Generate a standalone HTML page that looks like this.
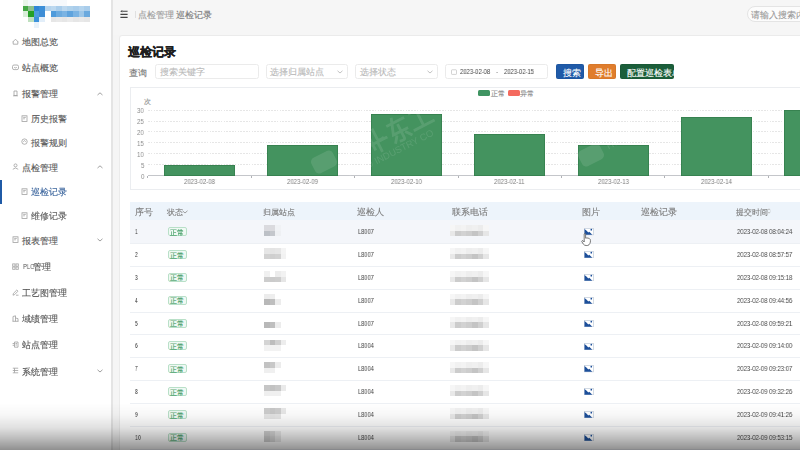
<!DOCTYPE html>
<html><head><meta charset="utf-8"><title>巡检记录</title>
<style>
html,body{margin:0;padding:0;}
body{width:800px;height:450px;overflow:hidden;position:relative;background:#fff;font-family:"Liberation Sans",sans-serif;}
.t{position:absolute;white-space:nowrap;line-height:1;}
.r{position:absolute;}
#wrap{position:absolute;left:-4px;top:-4px;width:808px;height:458px;overflow:hidden;filter:blur(0.4px);}
#inner{position:absolute;left:4px;top:4px;width:804px;height:454px;}
</style></head><body>
<div id="wrap"><div id="inner">
<div class="r" style="left:-4.00px;top:-4.00px;width:115.00px;height:458.00px;background:#fff"></div>
<div class="r" style="left:111.00px;top:-4.00px;width:2.00px;height:458.00px;background:#e4e4e4"></div>
<div class="r" style="left:113.00px;top:-4.00px;width:691.00px;height:458.00px;background:#f5f5f5"></div>
<div class="r" style="left:113.00px;top:-4.00px;width:691.00px;height:39.00px;background:#f6f6f6"></div>
<div class="r" style="left:0;top:0;width:100px;height:40px;filter:blur(0.45px)">
<div class="r" style="left:22.50px;top:0.00px;width:5.65px;height:5.65px;background:#e8f5e8"></div>
<div class="r" style="left:28.10px;top:0.00px;width:5.65px;height:5.65px;background:#f3f8fb"></div>
<div class="r" style="left:33.70px;top:0.00px;width:5.65px;height:5.65px;background:#f3f8fb"></div>
<div class="r" style="left:39.30px;top:0.00px;width:5.65px;height:5.65px;background:#f3f8fb"></div>
<div class="r" style="left:44.90px;top:0.00px;width:5.65px;height:5.65px;background:#f6f9fc"></div>
<div class="r" style="left:50.50px;top:0.00px;width:5.65px;height:5.65px;background:#f6f9fc"></div>
<div class="r" style="left:56.10px;top:0.00px;width:5.65px;height:5.65px;background:#f6f9fc"></div>
<div class="r" style="left:61.70px;top:0.00px;width:5.65px;height:5.65px;background:#f6f9fc"></div>
<div class="r" style="left:22.50px;top:5.60px;width:5.65px;height:5.65px;background:#45a845"></div>
<div class="r" style="left:28.10px;top:5.60px;width:5.65px;height:5.65px;background:#8cc08c"></div>
<div class="r" style="left:33.70px;top:5.60px;width:5.65px;height:5.65px;background:#2f86d6"></div>
<div class="r" style="left:39.30px;top:5.60px;width:5.65px;height:5.65px;background:#3b8fd8"></div>
<div class="r" style="left:44.90px;top:5.60px;width:5.65px;height:5.65px;background:#b4d4ee"></div>
<div class="r" style="left:50.50px;top:5.60px;width:5.65px;height:5.65px;background:#bcd8ef"></div>
<div class="r" style="left:56.10px;top:5.60px;width:5.65px;height:5.65px;background:#a9cdeb"></div>
<div class="r" style="left:61.70px;top:5.60px;width:5.65px;height:5.65px;background:#bcd8ef"></div>
<div class="r" style="left:67.30px;top:5.60px;width:5.65px;height:5.65px;background:#b0d2ec"></div>
<div class="r" style="left:72.90px;top:5.60px;width:5.65px;height:5.65px;background:#a9cdeb"></div>
<div class="r" style="left:78.50px;top:5.60px;width:5.65px;height:5.65px;background:#b4d4ee"></div>
<div class="r" style="left:84.10px;top:5.60px;width:5.65px;height:5.65px;background:#a9cdeb"></div>
<div class="r" style="left:22.50px;top:11.20px;width:5.65px;height:5.65px;background:#d9eed9"></div>
<div class="r" style="left:28.10px;top:11.20px;width:5.65px;height:5.65px;background:#25a025"></div>
<div class="r" style="left:33.70px;top:11.20px;width:5.65px;height:5.65px;background:#4e9ddd"></div>
<div class="r" style="left:39.30px;top:11.20px;width:5.65px;height:5.65px;background:#3d8dd6"></div>
<div class="r" style="left:50.50px;top:11.20px;width:5.65px;height:5.65px;background:#4f9bdb"></div>
<div class="r" style="left:56.10px;top:11.20px;width:5.65px;height:5.65px;background:#6cabdf"></div>
<div class="r" style="left:61.70px;top:11.20px;width:5.65px;height:5.65px;background:#7ab3e3"></div>
<div class="r" style="left:67.30px;top:11.20px;width:5.65px;height:5.65px;background:#5fa3dd"></div>
<div class="r" style="left:72.90px;top:11.20px;width:5.65px;height:5.65px;background:#7ab3e3"></div>
<div class="r" style="left:78.50px;top:11.20px;width:5.65px;height:5.65px;background:#9cc6e8"></div>
<div class="r" style="left:84.10px;top:11.20px;width:5.65px;height:5.65px;background:#6aa9de"></div>
<div class="r" style="left:28.10px;top:16.80px;width:5.65px;height:5.65px;background:#bfe0bf"></div>
<div class="r" style="left:33.70px;top:16.80px;width:5.65px;height:5.65px;background:#3c92dc"></div>
<div class="r" style="left:39.30px;top:16.80px;width:5.65px;height:5.65px;background:#e2eef9"></div>
<div class="r" style="left:50.50px;top:16.80px;width:5.65px;height:5.65px;background:#e6e6e6"></div>
<div class="r" style="left:56.10px;top:16.80px;width:5.65px;height:5.65px;background:#e9e9e9"></div>
<div class="r" style="left:61.70px;top:16.80px;width:5.65px;height:5.65px;background:#e6e6e6"></div>
<div class="r" style="left:67.30px;top:16.80px;width:5.65px;height:5.65px;background:#ebebeb"></div>
<div class="r" style="left:72.90px;top:16.80px;width:5.65px;height:5.65px;background:#e6e6e6"></div>
<div class="r" style="left:78.50px;top:16.80px;width:5.65px;height:5.65px;background:#e9e9e9"></div>
<div class="r" style="left:84.10px;top:16.80px;width:5.65px;height:5.65px;background:#e6e6e6"></div>
<div class="r" style="left:33.70px;top:22.40px;width:5.65px;height:5.65px;background:#e8f2fa"></div>
</div>
<svg class="r" style="left:11.50px;top:37.50px" width="7" height="7" viewBox="0 0 7 7"><path d="M0.6 4.2 L3.5 1.2 L6.4 4.2 M1.2 3.6 V6.2 H5.8 V3.6" stroke="#a0a0a0" stroke-width="0.8" fill="none"/></svg>
<div class="t" style="left:21.90px;top:37.84px;font-size:8.71px;color:#555555;font-weight:normal;-webkit-text-stroke:0.12px #555555;">地图总览</div>
<svg class="r" style="left:11.50px;top:63.70px" width="7" height="7" viewBox="0 0 7 7"><rect x="0.5" y="1" width="6" height="4.6" rx="1.5" stroke="#a0a0a0" stroke-width="0.8" fill="none"/><path d="M2.2 3.4 Q3.5 4.4 4.8 3.4" stroke="#a0a0a0" stroke-width="0.8" fill="none"/></svg>
<div class="t" style="left:21.90px;top:64.04px;font-size:8.71px;color:#555555;font-weight:normal;-webkit-text-stroke:0.12px #555555;">站点概览</div>
<svg class="r" style="left:11.50px;top:90.10px" width="7" height="7" viewBox="0 0 7 7"><path d="M2 1 H5 V5.5 H2 Z M1 5.8 H6" stroke="#a0a0a0" stroke-width="0.8" fill="none"/></svg>
<div class="t" style="left:21.90px;top:90.44px;font-size:8.71px;color:#555555;font-weight:normal;-webkit-text-stroke:0.12px #555555;">报警管理</div>
<svg class="r" style="left:96.50px;top:91.60px" width="6" height="4" viewBox="0 0 6 4"><path d="M0.5 3 L3 0.8 L5.5 3" stroke="#888" stroke-width="0.8" fill="none"/></svg>
<svg class="r" style="left:11.50px;top:163.20px" width="7" height="7" viewBox="0 0 7 7"><circle cx="3.5" cy="2.4" r="1.5" stroke="#a0a0a0" stroke-width="0.8" fill="none"/><path d="M0.8 6.3 Q3.5 3.6 6.2 6.3" stroke="#a0a0a0" stroke-width="0.8" fill="none"/></svg>
<div class="t" style="left:21.90px;top:163.54px;font-size:8.71px;color:#555555;font-weight:normal;-webkit-text-stroke:0.12px #555555;">点检管理</div>
<svg class="r" style="left:96.50px;top:164.70px" width="6" height="4" viewBox="0 0 6 4"><path d="M0.5 3 L3 0.8 L5.5 3" stroke="#888" stroke-width="0.8" fill="none"/></svg>
<svg class="r" style="left:11.50px;top:236.30px" width="7" height="7" viewBox="0 0 7 7"><rect x="1" y="0.8" width="5" height="5.6" stroke="#a0a0a0" stroke-width="0.8" fill="none"/><path d="M2.2 2.4 H4.8 M2.2 3.8 H3.8" stroke="#a0a0a0" stroke-width="0.8" fill="none"/></svg>
<div class="t" style="left:21.90px;top:236.64px;font-size:8.71px;color:#555555;font-weight:normal;-webkit-text-stroke:0.12px #555555;">报表管理</div>
<svg class="r" style="left:96.50px;top:237.80px" width="6" height="4" viewBox="0 0 6 4"><path d="M0.5 0.8 L3 3 L5.5 0.8" stroke="#888" stroke-width="0.8" fill="none"/></svg>
<svg class="r" style="left:11.50px;top:262.50px" width="7" height="7" viewBox="0 0 7 7"><rect x="0.7" y="0.9" width="2.3" height="2.3" stroke="#a0a0a0" stroke-width="0.8" fill="none"/><rect x="4" y="0.9" width="2.3" height="2.3" stroke="#a0a0a0" stroke-width="0.8" fill="none"/><rect x="0.7" y="4" width="2.3" height="2.3" stroke="#a0a0a0" stroke-width="0.8" fill="none"/><rect x="4" y="4" width="2.3" height="2.3" stroke="#a0a0a0" stroke-width="0.8" fill="none"/></svg>
<div class="t" style="left:22.50px;top:262.96px;font-size:7.68px;color:#555555;font-weight:normal;transform:scaleX(0.753);transform-origin:0 50%;will-change:transform">PLC</div>
<div class="t" style="left:33.30px;top:262.84px;font-size:8.71px;color:#555555;font-weight:normal;-webkit-text-stroke:0.12px #555555;">管理</div>
<svg class="r" style="left:11.50px;top:288.50px" width="7" height="7" viewBox="0 0 7 7"><path d="M1 6.2 L1.4 4.4 L4.8 1 L6 2.2 L2.6 5.6 Z M4 6.2 H6.5" stroke="#a0a0a0" stroke-width="0.8" fill="none"/></svg>
<div class="t" style="left:21.90px;top:288.84px;font-size:8.71px;color:#555555;font-weight:normal;-webkit-text-stroke:0.12px #555555;">工艺图管理</div>
<svg class="r" style="left:11.50px;top:314.50px" width="7" height="7" viewBox="0 0 7 7"><path d="M1 6.3 V1.5 L3.5 0.8 V6.3 M3.5 3 L6 3.6 V6.3 M0.5 6.3 H6.5" stroke="#a0a0a0" stroke-width="0.8" fill="none"/></svg>
<div class="t" style="left:21.90px;top:314.84px;font-size:8.71px;color:#555555;font-weight:normal;-webkit-text-stroke:0.12px #555555;">域绩管理</div>
<svg class="r" style="left:11.50px;top:341.00px" width="7" height="7" viewBox="0 0 7 7"><path d="M2.5 1 V6.2 H6 V1 Z M0.6 2.5 H2.5 M0.6 4.3 H2.5 M3.5 2.5 H5 M3.5 4 H5" stroke="#a0a0a0" stroke-width="0.8" fill="none"/></svg>
<div class="t" style="left:21.90px;top:341.34px;font-size:8.71px;color:#555555;font-weight:normal;-webkit-text-stroke:0.12px #555555;">站点管理</div>
<svg class="r" style="left:11.50px;top:367.30px" width="7" height="7" viewBox="0 0 7 7"><path d="M0.8 1.2 H6.2 M0.8 3.5 H6.2 M0.8 5.8 H6.2 M2.5 1.2 V5.8" stroke="#a0a0a0" stroke-width="0.8" fill="none"/></svg>
<div class="t" style="left:21.90px;top:367.64px;font-size:8.71px;color:#555555;font-weight:normal;-webkit-text-stroke:0.12px #555555;">系统管理</div>
<svg class="r" style="left:96.50px;top:368.80px" width="6" height="4" viewBox="0 0 6 4"><path d="M0.5 0.8 L3 3 L5.5 0.8" stroke="#888" stroke-width="0.8" fill="none"/></svg>
<svg class="r" style="left:20.50px;top:114.50px" width="7" height="7" viewBox="0 0 7 7"><rect x="1" y="0.8" width="5" height="5.6" stroke="#a0a0a0" stroke-width="0.8" fill="none"/><path d="M2.2 2.4 H4.8 M2.2 3.8 H3.8" stroke="#a0a0a0" stroke-width="0.8" fill="none"/></svg>
<div class="t" style="left:31.20px;top:114.84px;font-size:8.71px;color:#5c5c5c;font-weight:normal;-webkit-text-stroke:0.12px #5c5c5c;">历史报警</div>
<svg class="r" style="left:20.50px;top:138.20px" width="7" height="7" viewBox="0 0 7 7"><circle cx="3.5" cy="3.6" r="2.7" stroke="#a0a0a0" stroke-width="0.8" fill="none"/><path d="M2.3 3.8 L3.5 2.5 L4.7 3.8" stroke="#a0a0a0" stroke-width="0.8" fill="none"/></svg>
<div class="t" style="left:31.20px;top:138.54px;font-size:8.71px;color:#5c5c5c;font-weight:normal;-webkit-text-stroke:0.12px #5c5c5c;">报警规则</div>
<svg class="r" style="left:20.50px;top:187.50px" width="7" height="7" viewBox="0 0 7 7"><rect x="1" y="0.8" width="5" height="5.6" stroke="#a0a0a0" stroke-width="0.8" fill="none"/><path d="M2.2 2.4 H4.8 M2.2 3.8 H3.8" stroke="#a0a0a0" stroke-width="0.8" fill="none"/></svg>
<div class="t" style="left:31.20px;top:187.84px;font-size:8.71px;color:#3a649c;font-weight:normal;-webkit-text-stroke:0.12px #3a649c;">巡检记录</div>
<svg class="r" style="left:20.50px;top:211.50px" width="7" height="7" viewBox="0 0 7 7"><rect x="1" y="0.8" width="5" height="5.6" stroke="#a0a0a0" stroke-width="0.8" fill="none"/><path d="M2.2 2.4 H4.8 M2.2 3.8 H3.8" stroke="#a0a0a0" stroke-width="0.8" fill="none"/></svg>
<div class="t" style="left:31.20px;top:211.84px;font-size:8.71px;color:#5c5c5c;font-weight:normal;-webkit-text-stroke:0.12px #5c5c5c;">维修记录</div>
<div class="r" style="left:0.00px;top:180.00px;width:2.20px;height:23.50px;background:#1f5aa6"></div>
<svg class="r" style="left:120.00px;top:10.00px" width="8" height="8.5" viewBox="0 0 8 8.5"><path d="M2.4 1.3 H7.6 M0.4 4.4 H7.6 M0.4 7.4 H7.6" stroke="#444" stroke-width="1.1"/><path d="M0.2 1.3 L2.4 0 V2.6 Z" fill="#444"/></svg>
<div class="r" style="left:135.00px;top:10.50px;width:0.80px;height:7.50px;background:#e0e0e0"></div>
<div class="t" style="left:138.20px;top:11.04px;font-size:8.71px;color:#9c9c9c;font-weight:normal;-webkit-text-stroke:0.12px #9c9c9c;">点检管理</div>
<div class="t" style="left:170.50px;top:11.20px;font-size:6.00px;color:#aaa;font-weight:normal;">/</div>
<div class="t" style="left:175.60px;top:11.04px;font-size:8.71px;color:#7a7a7a;font-weight:normal;-webkit-text-stroke:0.12px #7a7a7a;">巡检记录</div>
<div class="r" style="left:746.70px;top:6.00px;width:70.00px;height:15.70px;background:#fcfcfc;border:1px solid #e4e4e4;border-radius:8px;box-sizing:border-box"></div>
<div class="t" style="left:751.40px;top:10.84px;font-size:8.71px;color:#9a9a9a;font-weight:normal;-webkit-text-stroke:0.12px #9a9a9a;">请输入搜索内容</div>
<div class="r" style="left:118.90px;top:35.00px;width:700.00px;height:430.00px;background:#fff;border:1px solid #ebebeb;border-radius:3px;box-sizing:border-box"></div>
<div class="t" style="left:128.20px;top:45.56px;font-size:12.28px;color:#1e1e1e;font-weight:bold;-webkit-text-stroke:0.35px #1e1e1e">巡检记录</div>
<div class="t" style="left:129.00px;top:69.04px;font-size:8.71px;color:#777;font-weight:normal;-webkit-text-stroke:0.12px #777;">查询</div>
<div class="t" style="left:143.60px;top:69.51px;font-size:6.98px;color:#555;font-weight:normal;transform:scaleX(1.000);transform-origin:0 50%;will-change:transform">:</div>
<div class="r" style="left:155.00px;top:64.00px;width:103.50px;height:14.60px;background:#fff;border:1px solid #ebebeb;border-radius:2.5px;box-sizing:border-box"></div>
<div class="t" style="left:160.00px;top:68.34px;font-size:8.71px;color:#bababa;font-weight:normal;-webkit-text-stroke:0.12px #bababa;">搜索关键字</div>
<div class="r" style="left:265.50px;top:64.00px;width:82.00px;height:14.60px;background:#fff;border:1px solid #ebebeb;border-radius:2.5px;box-sizing:border-box"></div>
<div class="t" style="left:270.40px;top:68.34px;font-size:8.71px;color:#bababa;font-weight:normal;-webkit-text-stroke:0.12px #bababa;">选择归属站点</div>
<svg class="r" style="left:336.50px;top:69.50px" width="6" height="4" viewBox="0 0 6 4"><path d="M0.5 0.8 L3 3 L5.5 0.8" stroke="#b4b4b4" stroke-width="0.8" fill="none"/></svg>
<div class="r" style="left:355.00px;top:64.00px;width:82.50px;height:14.60px;background:#fff;border:1px solid #ebebeb;border-radius:2.5px;box-sizing:border-box"></div>
<div class="t" style="left:360.40px;top:68.34px;font-size:8.71px;color:#bababa;font-weight:normal;-webkit-text-stroke:0.12px #bababa;">选择状态</div>
<svg class="r" style="left:426.50px;top:69.50px" width="6" height="4" viewBox="0 0 6 4"><path d="M0.5 0.8 L3 3 L5.5 0.8" stroke="#b4b4b4" stroke-width="0.8" fill="none"/></svg>
<div class="r" style="left:445.40px;top:64.00px;width:102.60px;height:15.00px;background:#fff;border:1px solid #ebebeb;border-radius:2.5px;box-sizing:border-box"></div>
<svg class="r" style="left:450.50px;top:68.50px" width="6" height="6" viewBox="0 0 6 6"><rect x="0.5" y="0.8" width="5" height="4.6" rx="0.6" stroke="#c0c0c0" stroke-width="0.7" fill="none"/></svg>
<div class="t" style="left:459.60px;top:69.12px;font-size:6.56px;color:#444;font-weight:normal;transform:scaleX(0.903);transform-origin:0 50%;will-change:transform">2023-02-08</div>
<div class="t" style="left:496.20px;top:69.12px;font-size:6.56px;color:#777;font-weight:normal;transform:scaleX(1.000);transform-origin:0 50%;will-change:transform">-</div>
<div class="t" style="left:504.00px;top:69.12px;font-size:6.56px;color:#444;font-weight:normal;transform:scaleX(0.894);transform-origin:0 50%;will-change:transform">2023-02-15</div>
<div class="r" style="left:556.20px;top:64.10px;width:27.90px;height:14.60px;background:#1f5aa8;border-radius:2px;box-shadow:inset 0 0 0 0.6px rgba(0,0,0,0.08)"></div>
<div class="t" style="left:562.95px;top:68.64px;font-size:8.71px;color:#fff;font-weight:normal;-webkit-text-stroke:0.12px #fff;">搜索</div>
<div class="r" style="left:588.00px;top:64.10px;width:27.70px;height:14.60px;background:#e07d2c;border-radius:2px;box-shadow:inset 0 0 0 0.6px rgba(0,0,0,0.08)"></div>
<div class="t" style="left:594.65px;top:68.64px;font-size:8.71px;color:#fff;font-weight:normal;-webkit-text-stroke:0.12px #fff;">导出</div>
<div class="r" style="left:619.80px;top:64.10px;width:54.20px;height:14.60px;background:#1b5e3a;border-radius:2px;box-shadow:inset 0 0 0 0.6px rgba(0,0,0,0.08)"></div>
<div class="t" style="left:626.50px;top:68.64px;font-size:8.71px;color:#fff;font-weight:normal;-webkit-text-stroke:0.12px #fff;">配置巡检表单</div>
<div class="r" style="left:129.90px;top:86.50px;width:690.00px;height:103.70px;background:#fff;border:1px solid #ebedf0;box-sizing:border-box"></div>
<div class="r" style="left:478.00px;top:89.60px;width:11.75px;height:6.30px;background:#3f9462;border-radius:1.5px"></div>
<div class="t" style="left:491.40px;top:90.27px;font-size:7.26px;color:#8a8a8a;font-weight:normal;-webkit-text-stroke:0.12px #8a8a8a;">正常</div>
<div class="r" style="left:508.00px;top:89.60px;width:11.75px;height:6.30px;background:#f46a5e;border-radius:1.5px"></div>
<div class="t" style="left:519.90px;top:90.27px;font-size:7.26px;color:#8a8a8a;font-weight:normal;-webkit-text-stroke:0.12px #8a8a8a;">异常</div>
<div class="t" style="left:144.00px;top:97.57px;font-size:7.26px;color:#8a8a8a;font-weight:normal;-webkit-text-stroke:0.12px #8a8a8a;">次</div>
<div class="t" style="left:137.20px;top:107.91px;font-size:6.28px;color:#8c8c8c;font-weight:normal;transform:scaleX(0.959);transform-origin:0 50%;will-change:transform">30</div>
<div class="r" style="left:147.5px;top:109.55px;width:660px;height:1px;background:repeating-linear-gradient(to right,#e6e6e6 0,#e6e6e6 1.6px,transparent 1.6px,transparent 2.8px)"></div>
<div class="t" style="left:137.20px;top:118.86px;font-size:6.28px;color:#8c8c8c;font-weight:normal;transform:scaleX(0.959);transform-origin:0 50%;will-change:transform">25</div>
<div class="r" style="left:147.5px;top:120.50px;width:660px;height:1px;background:repeating-linear-gradient(to right,#e6e6e6 0,#e6e6e6 1.6px,transparent 1.6px,transparent 2.8px)"></div>
<div class="t" style="left:137.20px;top:129.81px;font-size:6.28px;color:#8c8c8c;font-weight:normal;transform:scaleX(0.959);transform-origin:0 50%;will-change:transform">20</div>
<div class="r" style="left:147.5px;top:131.45px;width:660px;height:1px;background:repeating-linear-gradient(to right,#e6e6e6 0,#e6e6e6 1.6px,transparent 1.6px,transparent 2.8px)"></div>
<div class="t" style="left:137.20px;top:140.76px;font-size:6.28px;color:#8c8c8c;font-weight:normal;transform:scaleX(0.959);transform-origin:0 50%;will-change:transform">15</div>
<div class="r" style="left:147.5px;top:142.40px;width:660px;height:1px;background:repeating-linear-gradient(to right,#e6e6e6 0,#e6e6e6 1.6px,transparent 1.6px,transparent 2.8px)"></div>
<div class="t" style="left:137.20px;top:151.71px;font-size:6.28px;color:#8c8c8c;font-weight:normal;transform:scaleX(0.959);transform-origin:0 50%;will-change:transform">10</div>
<div class="r" style="left:147.5px;top:153.35px;width:660px;height:1px;background:repeating-linear-gradient(to right,#e6e6e6 0,#e6e6e6 1.6px,transparent 1.6px,transparent 2.8px)"></div>
<div class="t" style="left:140.55px;top:162.66px;font-size:6.28px;color:#8c8c8c;font-weight:normal;transform:scaleX(0.959);transform-origin:0 50%;will-change:transform">5</div>
<div class="r" style="left:147.5px;top:164.30px;width:660px;height:1px;background:repeating-linear-gradient(to right,#e6e6e6 0,#e6e6e6 1.6px,transparent 1.6px,transparent 2.8px)"></div>
<div class="t" style="left:140.55px;top:173.61px;font-size:6.28px;color:#8c8c8c;font-weight:normal;transform:scaleX(0.959);transform-origin:0 50%;will-change:transform">0</div>
<div class="r" style="left:147.50px;top:175.35px;width:660.00px;height:1.00px;background:#c4c6ca"></div>
<div class="r" style="left:147.20px;top:175.75px;width:0.80px;height:2.00px;background:#b0b2b6"></div>
<div class="r" style="left:250.65px;top:175.75px;width:0.80px;height:2.00px;background:#b0b2b6"></div>
<div class="r" style="left:354.10px;top:175.75px;width:0.80px;height:2.00px;background:#b0b2b6"></div>
<div class="r" style="left:457.55px;top:175.75px;width:0.80px;height:2.00px;background:#b0b2b6"></div>
<div class="r" style="left:561.00px;top:175.75px;width:0.80px;height:2.00px;background:#b0b2b6"></div>
<div class="r" style="left:664.45px;top:175.75px;width:0.80px;height:2.00px;background:#b0b2b6"></div>
<div class="r" style="left:767.90px;top:175.75px;width:0.80px;height:2.00px;background:#b0b2b6"></div>
<div class="r" style="left:871.35px;top:175.75px;width:0.80px;height:2.00px;background:#b0b2b6"></div>
<div class="r" style="left:163.75px;top:164.80px;width:71.20px;height:10.95px;background:#44935f;box-shadow:inset 0 0 0 0.7px #337d4c"></div>
<div class="t" style="left:183.85px;top:179.08px;font-size:6.63px;color:#7c7c7c;font-weight:normal;transform:scaleX(0.914);transform-origin:0 50%;will-change:transform">2023-02-08</div>
<div class="r" style="left:267.20px;top:145.09px;width:71.20px;height:30.66px;background:#44935f;box-shadow:inset 0 0 0 0.7px #337d4c"></div>
<div class="t" style="left:287.30px;top:179.08px;font-size:6.63px;color:#7c7c7c;font-weight:normal;transform:scaleX(0.914);transform-origin:0 50%;will-change:transform">2023-02-09</div>
<div class="r" style="left:370.65px;top:114.43px;width:71.20px;height:61.32px;background:#44935f;box-shadow:inset 0 0 0 0.7px #337d4c"></div>
<div class="t" style="left:390.75px;top:179.08px;font-size:6.63px;color:#7c7c7c;font-weight:normal;transform:scaleX(0.914);transform-origin:0 50%;will-change:transform">2023-02-10</div>
<div class="r" style="left:474.10px;top:134.14px;width:71.20px;height:41.61px;background:#44935f;box-shadow:inset 0 0 0 0.7px #337d4c"></div>
<div class="t" style="left:494.20px;top:179.08px;font-size:6.63px;color:#7c7c7c;font-weight:normal;transform:scaleX(0.914);transform-origin:0 50%;will-change:transform">2023-02-11</div>
<div class="r" style="left:577.55px;top:145.09px;width:71.20px;height:30.66px;background:#44935f;box-shadow:inset 0 0 0 0.7px #337d4c"></div>
<div class="t" style="left:597.65px;top:179.08px;font-size:6.63px;color:#7c7c7c;font-weight:normal;transform:scaleX(0.914);transform-origin:0 50%;will-change:transform">2023-02-13</div>
<div class="r" style="left:681.00px;top:116.62px;width:71.20px;height:59.13px;background:#44935f;box-shadow:inset 0 0 0 0.7px #337d4c"></div>
<div class="t" style="left:701.10px;top:179.08px;font-size:6.63px;color:#7c7c7c;font-weight:normal;transform:scaleX(0.914);transform-origin:0 50%;will-change:transform">2023-02-14</div>
<div class="r" style="left:784.45px;top:110.05px;width:71.20px;height:65.70px;background:#44935f;box-shadow:inset 0 0 0 0.7px #337d4c"></div>
<div class="t" style="left:804.55px;top:179.08px;font-size:6.63px;color:#7c7c7c;font-weight:normal;transform:scaleX(0.914);transform-origin:0 50%;will-change:transform">2023-02-15</div>
<svg class="r" style="left:0;top:0;opacity:0.11" width="800" height="200" viewBox="0 0 800 200"><g transform="translate(324 162) rotate(-27)" fill="#fff" stroke="none"><rect x="-12" y="-8.5" width="24" height="17" rx="4.5"/><g fill="none" stroke="#fff" stroke-width="2.6" stroke-linecap="square" transform="translate(6 1) scale(1.08)"><path d="M44 -6 L38 4 M42 -2 V10 M48 -7 V2 Q48 5 53 4 M38 5 H56 M47 5 V14"/><path d="M62 -4 H78 M68 -8 L63 6 H77 M71 0 V13 Q71 15 67 14 M65 9 L62 13 M75 9 L78 13"/><path d="M85 -5 H100 M92 -5 V11 M83 11 H102"/></g><text x="16" y="26" font-family="Liberation Sans" font-size="9.5" fill="#fff">HUAD INDUSTRY CO</text></g><g transform="translate(591 155) rotate(-27)" fill="#fff" stroke="none"><rect x="-12" y="-8.5" width="24" height="17" rx="4.5"/><text x="18" y="3" font-family="Liberation Sans" font-size="9.5" fill="#fff">HU</text></g></svg>
<div class="r" style="left:130.00px;top:202.00px;width:690.00px;height:18.30px;background:#edf4fb"></div>
<div class="t" style="left:134.70px;top:207.98px;font-size:8.84px;color:#7c7c7c;font-weight:normal;-webkit-text-stroke:0.12px #7c7c7c;">序号</div>
<div class="t" style="left:167.40px;top:208.18px;font-size:8.45px;color:#7c7c7c;font-weight:normal;-webkit-text-stroke:0.12px #7c7c7c;">状态</div>
<svg class="r" style="left:181.50px;top:209.50px" width="6" height="4" viewBox="0 0 6 4"><path d="M0.5 0.8 L3 3 L5.5 0.8" stroke="#888" stroke-width="0.8" fill="none"/></svg>
<div class="t" style="left:263.40px;top:208.18px;font-size:8.45px;color:#7c7c7c;font-weight:normal;-webkit-text-stroke:0.12px #7c7c7c;">归属站点</div>
<div class="t" style="left:357.10px;top:208.04px;font-size:8.71px;color:#7c7c7c;font-weight:normal;-webkit-text-stroke:0.12px #7c7c7c;">巡检人</div>
<div class="t" style="left:452.40px;top:208.04px;font-size:8.71px;color:#7c7c7c;font-weight:normal;-webkit-text-stroke:0.12px #7c7c7c;">联系电话</div>
<div class="t" style="left:581.90px;top:208.14px;font-size:8.51px;color:#7c7c7c;font-weight:normal;-webkit-text-stroke:0.12px #7c7c7c;">图片</div>
<div class="t" style="left:641.10px;top:208.04px;font-size:8.71px;color:#7c7c7c;font-weight:normal;-webkit-text-stroke:0.12px #7c7c7c;">巡检记录</div>
<div class="t" style="left:736.40px;top:208.18px;font-size:8.45px;color:#7c7c7c;font-weight:normal;-webkit-text-stroke:0.12px #7c7c7c;">提交时间</div>
<svg class="r" style="left:766.50px;top:208.20px" width="4" height="6" viewBox="0 0 4 6"><path d="M0.6 2.3 L2 0.8 L3.4 2.3 M0.6 3.7 L2 5.2 L3.4 3.7" stroke="#aaa" stroke-width="0.7" fill="none"/></svg>
<div class="r" style="left:130.00px;top:220.30px;width:690.00px;height:22.85px;background:#f4f6fa"></div>
<div class="r" style="left:130.00px;top:243.05px;width:690.00px;height:0.80px;background:#edf0f4"></div>
<div class="t" style="left:135.30px;top:228.23px;font-size:6.98px;color:#333;font-weight:normal;transform:scaleX(0.670);transform-origin:0 50%;will-change:transform">1</div>
<div class="r" style="left:168.00px;top:227.23px;width:18.70px;height:9.00px;background:#f0f9f4;border:0.8px solid #b9e0c8;border-radius:2px;box-sizing:border-box"></div>
<div class="t" style="left:170.00px;top:228.73px;font-size:7.39px;color:#3f9b63;font-weight:normal;-webkit-text-stroke:0.12px #3f9b63;">正常</div>
<div class="r" style="left:264.00px;top:225.33px;width:5.55px;height:5.55px;background:#dadade"></div>
<div class="r" style="left:269.50px;top:225.33px;width:5.55px;height:5.55px;background:#dadade"></div>
<div class="r" style="left:264.00px;top:230.83px;width:5.55px;height:5.55px;background:#bcc0c6"></div>
<div class="r" style="left:269.50px;top:230.83px;width:5.55px;height:5.55px;background:#c4c7cc"></div>
<div class="r" style="left:275.00px;top:225.33px;width:5.55px;height:5.55px;background:#f0f2f5"></div>
<div class="r" style="left:275.00px;top:230.83px;width:5.55px;height:5.55px;background:#eef0f3"></div>
<div class="t" style="left:358.20px;top:229.10px;font-size:6.84px;color:#444;font-weight:normal;transform:scaleX(0.830);transform-origin:0 50%;will-change:transform">L8007</div>
<div class="r" style="left:449.60px;top:225.33px;width:5.65px;height:5.50px;background:#f6f6f6"></div>
<div class="r" style="left:449.60px;top:230.83px;width:5.65px;height:5.50px;background:#e8e8e8"></div>
<div class="r" style="left:455.20px;top:225.33px;width:5.65px;height:5.50px;background:#f1f1f1"></div>
<div class="r" style="left:455.20px;top:230.83px;width:5.65px;height:5.50px;background:#cccccc"></div>
<div class="r" style="left:460.80px;top:225.33px;width:5.65px;height:5.50px;background:#f3f3f3"></div>
<div class="r" style="left:460.80px;top:230.83px;width:5.65px;height:5.50px;background:#d2d2d2"></div>
<div class="r" style="left:466.40px;top:225.33px;width:5.65px;height:5.50px;background:#eeeeee"></div>
<div class="r" style="left:466.40px;top:230.83px;width:5.65px;height:5.50px;background:#cdcdcd"></div>
<div class="r" style="left:472.00px;top:225.33px;width:5.65px;height:5.50px;background:#f0f0f0"></div>
<div class="r" style="left:472.00px;top:230.83px;width:5.65px;height:5.50px;background:#c4c4c4"></div>
<div class="r" style="left:477.60px;top:225.33px;width:5.65px;height:5.50px;background:#ececec"></div>
<div class="r" style="left:477.60px;top:230.83px;width:5.65px;height:5.50px;background:#d0d0d0"></div>
<div class="r" style="left:483.20px;top:225.33px;width:5.65px;height:5.50px;background:#f6f6f6"></div>
<div class="r" style="left:483.20px;top:230.83px;width:5.65px;height:5.50px;background:#e6e6e6"></div>
<svg class="r" style="left:584.30px;top:228.33px" width="9.8" height="7.2" viewBox="0 0 9.8 7.2"><rect x="0.35" y="0.35" width="9.1" height="6.5" fill="#fff" stroke="#bfcad8" stroke-width="0.7"/><path d="M0.5 1.0 L2.4 2.4 L4.3 4.6 L5.3 3.8 L6.8 5.2 L8.3 6.8 H0.5 Z" fill="#1d4f9a"/><circle cx="7.3" cy="1.7" r="0.85" fill="#1d4f9a"/></svg>
<div class="t" style="left:737.20px;top:228.22px;font-size:7.40px;color:#464646;font-weight:normal;transform:scaleX(0.805);transform-origin:0 50%;will-change:transform">2023-02-08 08:04:24</div>
<div class="r" style="left:130.00px;top:265.90px;width:690.00px;height:0.80px;background:#edf0f4"></div>
<div class="t" style="left:135.30px;top:251.08px;font-size:6.98px;color:#333;font-weight:normal;transform:scaleX(0.670);transform-origin:0 50%;will-change:transform">2</div>
<div class="r" style="left:168.00px;top:250.08px;width:18.70px;height:9.00px;background:#f0f9f4;border:0.8px solid #b9e0c8;border-radius:2px;box-sizing:border-box"></div>
<div class="t" style="left:170.00px;top:251.58px;font-size:7.39px;color:#3f9b63;font-weight:normal;-webkit-text-stroke:0.12px #3f9b63;">正常</div>
<div class="r" style="left:264.00px;top:248.18px;width:5.55px;height:5.55px;background:#e6e6e6"></div>
<div class="r" style="left:269.50px;top:248.18px;width:5.55px;height:5.55px;background:#e4e4e4"></div>
<div class="r" style="left:275.00px;top:248.18px;width:5.55px;height:5.55px;background:#e6e6e6"></div>
<div class="r" style="left:264.00px;top:253.68px;width:5.55px;height:5.55px;background:#d2d2d2"></div>
<div class="r" style="left:269.50px;top:253.68px;width:5.55px;height:5.55px;background:#cfcfcf"></div>
<div class="r" style="left:275.00px;top:253.68px;width:5.55px;height:5.55px;background:#d2d2d2"></div>
<div class="r" style="left:280.50px;top:248.18px;width:5.55px;height:5.55px;background:#f4f4f4"></div>
<div class="r" style="left:280.50px;top:253.68px;width:5.55px;height:5.55px;background:#f2f2f2"></div>
<div class="t" style="left:358.20px;top:251.95px;font-size:6.84px;color:#444;font-weight:normal;transform:scaleX(0.830);transform-origin:0 50%;will-change:transform">L8007</div>
<div class="r" style="left:449.60px;top:248.18px;width:5.65px;height:5.50px;background:#f6f6f6"></div>
<div class="r" style="left:449.60px;top:253.68px;width:5.65px;height:5.50px;background:#e8e8e8"></div>
<div class="r" style="left:455.20px;top:248.18px;width:5.65px;height:5.50px;background:#f1f1f1"></div>
<div class="r" style="left:455.20px;top:253.68px;width:5.65px;height:5.50px;background:#cccccc"></div>
<div class="r" style="left:460.80px;top:248.18px;width:5.65px;height:5.50px;background:#f3f3f3"></div>
<div class="r" style="left:460.80px;top:253.68px;width:5.65px;height:5.50px;background:#d2d2d2"></div>
<div class="r" style="left:466.40px;top:248.18px;width:5.65px;height:5.50px;background:#eeeeee"></div>
<div class="r" style="left:466.40px;top:253.68px;width:5.65px;height:5.50px;background:#cdcdcd"></div>
<div class="r" style="left:472.00px;top:248.18px;width:5.65px;height:5.50px;background:#f0f0f0"></div>
<div class="r" style="left:472.00px;top:253.68px;width:5.65px;height:5.50px;background:#c4c4c4"></div>
<div class="r" style="left:477.60px;top:248.18px;width:5.65px;height:5.50px;background:#ececec"></div>
<div class="r" style="left:477.60px;top:253.68px;width:5.65px;height:5.50px;background:#d0d0d0"></div>
<div class="r" style="left:483.20px;top:248.18px;width:5.65px;height:5.50px;background:#f6f6f6"></div>
<div class="r" style="left:483.20px;top:253.68px;width:5.65px;height:5.50px;background:#e6e6e6"></div>
<svg class="r" style="left:584.30px;top:251.18px" width="9.8" height="7.2" viewBox="0 0 9.8 7.2"><rect x="0.35" y="0.35" width="9.1" height="6.5" fill="#fff" stroke="#bfcad8" stroke-width="0.7"/><path d="M0.5 1.0 L2.4 2.4 L4.3 4.6 L5.3 3.8 L6.8 5.2 L8.3 6.8 H0.5 Z" fill="#1d4f9a"/><circle cx="7.3" cy="1.7" r="0.85" fill="#1d4f9a"/></svg>
<div class="t" style="left:737.20px;top:251.07px;font-size:7.40px;color:#464646;font-weight:normal;transform:scaleX(0.805);transform-origin:0 50%;will-change:transform">2023-02-08 08:57:57</div>
<div class="r" style="left:130.00px;top:288.75px;width:690.00px;height:0.80px;background:#edf0f4"></div>
<div class="t" style="left:135.30px;top:273.93px;font-size:6.98px;color:#333;font-weight:normal;transform:scaleX(0.670);transform-origin:0 50%;will-change:transform">3</div>
<div class="r" style="left:168.00px;top:272.93px;width:18.70px;height:9.00px;background:#f0f9f4;border:0.8px solid #b9e0c8;border-radius:2px;box-sizing:border-box"></div>
<div class="t" style="left:170.00px;top:274.43px;font-size:7.39px;color:#3f9b63;font-weight:normal;-webkit-text-stroke:0.12px #3f9b63;">正常</div>
<div class="r" style="left:264.00px;top:271.03px;width:5.55px;height:5.55px;background:#f0f0f0"></div>
<div class="r" style="left:275.00px;top:271.03px;width:5.55px;height:5.55px;background:#ececec"></div>
<div class="r" style="left:280.50px;top:271.03px;width:5.55px;height:5.55px;background:#f2f2f2"></div>
<div class="r" style="left:264.00px;top:276.53px;width:5.55px;height:5.55px;background:#cdcdcd"></div>
<div class="r" style="left:269.50px;top:276.53px;width:5.55px;height:5.55px;background:#cbcbcb"></div>
<div class="r" style="left:275.00px;top:276.53px;width:5.55px;height:5.55px;background:#cdcdcd"></div>
<div class="r" style="left:280.50px;top:276.53px;width:5.55px;height:5.55px;background:#e6e6e6"></div>
<div class="t" style="left:358.20px;top:274.80px;font-size:6.84px;color:#444;font-weight:normal;transform:scaleX(0.830);transform-origin:0 50%;will-change:transform">L8007</div>
<div class="r" style="left:449.60px;top:271.03px;width:5.65px;height:5.50px;background:#f6f6f6"></div>
<div class="r" style="left:449.60px;top:276.53px;width:5.65px;height:5.50px;background:#e8e8e8"></div>
<div class="r" style="left:455.20px;top:271.03px;width:5.65px;height:5.50px;background:#f1f1f1"></div>
<div class="r" style="left:455.20px;top:276.53px;width:5.65px;height:5.50px;background:#cccccc"></div>
<div class="r" style="left:460.80px;top:271.03px;width:5.65px;height:5.50px;background:#f3f3f3"></div>
<div class="r" style="left:460.80px;top:276.53px;width:5.65px;height:5.50px;background:#d2d2d2"></div>
<div class="r" style="left:466.40px;top:271.03px;width:5.65px;height:5.50px;background:#eeeeee"></div>
<div class="r" style="left:466.40px;top:276.53px;width:5.65px;height:5.50px;background:#cdcdcd"></div>
<div class="r" style="left:472.00px;top:271.03px;width:5.65px;height:5.50px;background:#f0f0f0"></div>
<div class="r" style="left:472.00px;top:276.53px;width:5.65px;height:5.50px;background:#c4c4c4"></div>
<div class="r" style="left:477.60px;top:271.03px;width:5.65px;height:5.50px;background:#ececec"></div>
<div class="r" style="left:477.60px;top:276.53px;width:5.65px;height:5.50px;background:#d0d0d0"></div>
<div class="r" style="left:483.20px;top:271.03px;width:5.65px;height:5.50px;background:#f6f6f6"></div>
<div class="r" style="left:483.20px;top:276.53px;width:5.65px;height:5.50px;background:#e6e6e6"></div>
<svg class="r" style="left:584.30px;top:274.03px" width="9.8" height="7.2" viewBox="0 0 9.8 7.2"><rect x="0.35" y="0.35" width="9.1" height="6.5" fill="#fff" stroke="#bfcad8" stroke-width="0.7"/><path d="M0.5 1.0 L2.4 2.4 L4.3 4.6 L5.3 3.8 L6.8 5.2 L8.3 6.8 H0.5 Z" fill="#1d4f9a"/><circle cx="7.3" cy="1.7" r="0.85" fill="#1d4f9a"/></svg>
<div class="t" style="left:737.20px;top:273.92px;font-size:7.40px;color:#464646;font-weight:normal;transform:scaleX(0.805);transform-origin:0 50%;will-change:transform">2023-02-08 09:15:18</div>
<div class="r" style="left:130.00px;top:311.60px;width:690.00px;height:0.80px;background:#edf0f4"></div>
<div class="t" style="left:135.30px;top:296.78px;font-size:6.98px;color:#333;font-weight:normal;transform:scaleX(0.670);transform-origin:0 50%;will-change:transform">4</div>
<div class="r" style="left:168.00px;top:295.78px;width:18.70px;height:9.00px;background:#f0f9f4;border:0.8px solid #b9e0c8;border-radius:2px;box-sizing:border-box"></div>
<div class="t" style="left:170.00px;top:297.28px;font-size:7.39px;color:#3f9b63;font-weight:normal;-webkit-text-stroke:0.12px #3f9b63;">正常</div>
<div class="r" style="left:264.00px;top:293.88px;width:5.55px;height:5.55px;background:#ececec"></div>
<div class="r" style="left:269.50px;top:293.88px;width:5.55px;height:5.55px;background:#eeeeee"></div>
<div class="r" style="left:264.00px;top:299.38px;width:5.55px;height:5.55px;background:#b8b8b8"></div>
<div class="r" style="left:269.50px;top:299.38px;width:5.55px;height:5.55px;background:#bebebe"></div>
<div class="r" style="left:275.00px;top:299.38px;width:5.55px;height:5.55px;background:#ececec"></div>
<div class="t" style="left:358.20px;top:297.65px;font-size:6.84px;color:#444;font-weight:normal;transform:scaleX(0.830);transform-origin:0 50%;will-change:transform">L8007</div>
<div class="r" style="left:449.60px;top:293.88px;width:5.65px;height:5.50px;background:#f6f6f6"></div>
<div class="r" style="left:449.60px;top:299.38px;width:5.65px;height:5.50px;background:#e8e8e8"></div>
<div class="r" style="left:455.20px;top:293.88px;width:5.65px;height:5.50px;background:#f1f1f1"></div>
<div class="r" style="left:455.20px;top:299.38px;width:5.65px;height:5.50px;background:#cccccc"></div>
<div class="r" style="left:460.80px;top:293.88px;width:5.65px;height:5.50px;background:#f3f3f3"></div>
<div class="r" style="left:460.80px;top:299.38px;width:5.65px;height:5.50px;background:#d2d2d2"></div>
<div class="r" style="left:466.40px;top:293.88px;width:5.65px;height:5.50px;background:#eeeeee"></div>
<div class="r" style="left:466.40px;top:299.38px;width:5.65px;height:5.50px;background:#cdcdcd"></div>
<div class="r" style="left:472.00px;top:293.88px;width:5.65px;height:5.50px;background:#f0f0f0"></div>
<div class="r" style="left:472.00px;top:299.38px;width:5.65px;height:5.50px;background:#c4c4c4"></div>
<div class="r" style="left:477.60px;top:293.88px;width:5.65px;height:5.50px;background:#ececec"></div>
<div class="r" style="left:477.60px;top:299.38px;width:5.65px;height:5.50px;background:#d0d0d0"></div>
<div class="r" style="left:483.20px;top:293.88px;width:5.65px;height:5.50px;background:#f6f6f6"></div>
<div class="r" style="left:483.20px;top:299.38px;width:5.65px;height:5.50px;background:#e6e6e6"></div>
<svg class="r" style="left:584.30px;top:296.88px" width="9.8" height="7.2" viewBox="0 0 9.8 7.2"><rect x="0.35" y="0.35" width="9.1" height="6.5" fill="#fff" stroke="#bfcad8" stroke-width="0.7"/><path d="M0.5 1.0 L2.4 2.4 L4.3 4.6 L5.3 3.8 L6.8 5.2 L8.3 6.8 H0.5 Z" fill="#1d4f9a"/><circle cx="7.3" cy="1.7" r="0.85" fill="#1d4f9a"/></svg>
<div class="t" style="left:737.20px;top:296.77px;font-size:7.40px;color:#464646;font-weight:normal;transform:scaleX(0.805);transform-origin:0 50%;will-change:transform">2023-02-08 09:44:56</div>
<div class="r" style="left:130.00px;top:334.45px;width:690.00px;height:0.80px;background:#edf0f4"></div>
<div class="t" style="left:135.30px;top:319.63px;font-size:6.98px;color:#333;font-weight:normal;transform:scaleX(0.670);transform-origin:0 50%;will-change:transform">5</div>
<div class="r" style="left:168.00px;top:318.63px;width:18.70px;height:9.00px;background:#f0f9f4;border:0.8px solid #b9e0c8;border-radius:2px;box-sizing:border-box"></div>
<div class="t" style="left:170.00px;top:320.13px;font-size:7.39px;color:#3f9b63;font-weight:normal;-webkit-text-stroke:0.12px #3f9b63;">正常</div>
<div class="r" style="left:264.00px;top:322.23px;width:5.55px;height:5.55px;background:#b8b8b8"></div>
<div class="r" style="left:269.50px;top:322.23px;width:5.55px;height:5.55px;background:#bebebe"></div>
<div class="r" style="left:275.00px;top:322.23px;width:5.55px;height:5.55px;background:#ececec"></div>
<div class="t" style="left:358.20px;top:320.50px;font-size:6.84px;color:#444;font-weight:normal;transform:scaleX(0.830);transform-origin:0 50%;will-change:transform">L8007</div>
<div class="r" style="left:449.60px;top:316.73px;width:5.65px;height:5.50px;background:#f6f6f6"></div>
<div class="r" style="left:449.60px;top:322.23px;width:5.65px;height:5.50px;background:#e8e8e8"></div>
<div class="r" style="left:455.20px;top:316.73px;width:5.65px;height:5.50px;background:#f1f1f1"></div>
<div class="r" style="left:455.20px;top:322.23px;width:5.65px;height:5.50px;background:#cccccc"></div>
<div class="r" style="left:460.80px;top:316.73px;width:5.65px;height:5.50px;background:#f3f3f3"></div>
<div class="r" style="left:460.80px;top:322.23px;width:5.65px;height:5.50px;background:#d2d2d2"></div>
<div class="r" style="left:466.40px;top:316.73px;width:5.65px;height:5.50px;background:#eeeeee"></div>
<div class="r" style="left:466.40px;top:322.23px;width:5.65px;height:5.50px;background:#cdcdcd"></div>
<div class="r" style="left:472.00px;top:316.73px;width:5.65px;height:5.50px;background:#f0f0f0"></div>
<div class="r" style="left:472.00px;top:322.23px;width:5.65px;height:5.50px;background:#c4c4c4"></div>
<div class="r" style="left:477.60px;top:316.73px;width:5.65px;height:5.50px;background:#ececec"></div>
<div class="r" style="left:477.60px;top:322.23px;width:5.65px;height:5.50px;background:#d0d0d0"></div>
<div class="r" style="left:483.20px;top:316.73px;width:5.65px;height:5.50px;background:#f6f6f6"></div>
<div class="r" style="left:483.20px;top:322.23px;width:5.65px;height:5.50px;background:#e6e6e6"></div>
<svg class="r" style="left:584.30px;top:319.73px" width="9.8" height="7.2" viewBox="0 0 9.8 7.2"><rect x="0.35" y="0.35" width="9.1" height="6.5" fill="#fff" stroke="#bfcad8" stroke-width="0.7"/><path d="M0.5 1.0 L2.4 2.4 L4.3 4.6 L5.3 3.8 L6.8 5.2 L8.3 6.8 H0.5 Z" fill="#1d4f9a"/><circle cx="7.3" cy="1.7" r="0.85" fill="#1d4f9a"/></svg>
<div class="t" style="left:737.20px;top:319.62px;font-size:7.40px;color:#464646;font-weight:normal;transform:scaleX(0.805);transform-origin:0 50%;will-change:transform">2023-02-08 09:59:21</div>
<div class="r" style="left:130.00px;top:357.30px;width:690.00px;height:0.80px;background:#edf0f4"></div>
<div class="t" style="left:135.30px;top:342.48px;font-size:6.98px;color:#333;font-weight:normal;transform:scaleX(0.670);transform-origin:0 50%;will-change:transform">6</div>
<div class="r" style="left:168.00px;top:341.48px;width:18.70px;height:9.00px;background:#f0f9f4;border:0.8px solid #b9e0c8;border-radius:2px;box-sizing:border-box"></div>
<div class="t" style="left:170.00px;top:342.98px;font-size:7.39px;color:#3f9b63;font-weight:normal;-webkit-text-stroke:0.12px #3f9b63;">正常</div>
<div class="r" style="left:264.00px;top:339.58px;width:5.55px;height:5.55px;background:#d4d4d4"></div>
<div class="r" style="left:269.50px;top:339.58px;width:5.55px;height:5.55px;background:#bdbdbd"></div>
<div class="r" style="left:275.00px;top:339.58px;width:5.55px;height:5.55px;background:#d0d0d0"></div>
<div class="r" style="left:280.50px;top:339.58px;width:5.55px;height:5.55px;background:#ededed"></div>
<div class="r" style="left:264.00px;top:345.08px;width:5.55px;height:5.55px;background:#f2f2f2"></div>
<div class="r" style="left:269.50px;top:345.08px;width:5.55px;height:5.55px;background:#f2f2f2"></div>
<div class="r" style="left:275.00px;top:345.08px;width:5.55px;height:5.55px;background:#f2f2f2"></div>
<div class="t" style="left:358.20px;top:343.35px;font-size:6.84px;color:#444;font-weight:normal;transform:scaleX(0.830);transform-origin:0 50%;will-change:transform">L8004</div>
<div class="r" style="left:449.60px;top:339.58px;width:5.65px;height:5.50px;background:#f6f6f6"></div>
<div class="r" style="left:449.60px;top:345.08px;width:5.65px;height:5.50px;background:#e8e8e8"></div>
<div class="r" style="left:455.20px;top:339.58px;width:5.65px;height:5.50px;background:#f1f1f1"></div>
<div class="r" style="left:455.20px;top:345.08px;width:5.65px;height:5.50px;background:#cccccc"></div>
<div class="r" style="left:460.80px;top:339.58px;width:5.65px;height:5.50px;background:#f3f3f3"></div>
<div class="r" style="left:460.80px;top:345.08px;width:5.65px;height:5.50px;background:#d2d2d2"></div>
<div class="r" style="left:466.40px;top:339.58px;width:5.65px;height:5.50px;background:#eeeeee"></div>
<div class="r" style="left:466.40px;top:345.08px;width:5.65px;height:5.50px;background:#cdcdcd"></div>
<div class="r" style="left:472.00px;top:339.58px;width:5.65px;height:5.50px;background:#f0f0f0"></div>
<div class="r" style="left:472.00px;top:345.08px;width:5.65px;height:5.50px;background:#c4c4c4"></div>
<div class="r" style="left:477.60px;top:339.58px;width:5.65px;height:5.50px;background:#ececec"></div>
<div class="r" style="left:477.60px;top:345.08px;width:5.65px;height:5.50px;background:#d0d0d0"></div>
<div class="r" style="left:483.20px;top:339.58px;width:5.65px;height:5.50px;background:#f6f6f6"></div>
<div class="r" style="left:483.20px;top:345.08px;width:5.65px;height:5.50px;background:#e6e6e6"></div>
<svg class="r" style="left:584.30px;top:342.58px" width="9.8" height="7.2" viewBox="0 0 9.8 7.2"><rect x="0.35" y="0.35" width="9.1" height="6.5" fill="#fff" stroke="#bfcad8" stroke-width="0.7"/><path d="M0.5 1.0 L2.4 2.4 L4.3 4.6 L5.3 3.8 L6.8 5.2 L8.3 6.8 H0.5 Z" fill="#1d4f9a"/><circle cx="7.3" cy="1.7" r="0.85" fill="#1d4f9a"/></svg>
<div class="t" style="left:737.20px;top:342.47px;font-size:7.40px;color:#464646;font-weight:normal;transform:scaleX(0.805);transform-origin:0 50%;will-change:transform">2023-02-09 09:14:00</div>
<div class="r" style="left:130.00px;top:380.15px;width:690.00px;height:0.80px;background:#edf0f4"></div>
<div class="t" style="left:135.30px;top:365.33px;font-size:6.98px;color:#333;font-weight:normal;transform:scaleX(0.670);transform-origin:0 50%;will-change:transform">7</div>
<div class="r" style="left:168.00px;top:364.33px;width:18.70px;height:9.00px;background:#f0f9f4;border:0.8px solid #b9e0c8;border-radius:2px;box-sizing:border-box"></div>
<div class="t" style="left:170.00px;top:365.83px;font-size:7.39px;color:#3f9b63;font-weight:normal;-webkit-text-stroke:0.12px #3f9b63;">正常</div>
<div class="r" style="left:264.00px;top:362.43px;width:5.55px;height:5.55px;background:#c2c2c2"></div>
<div class="r" style="left:269.50px;top:362.43px;width:5.55px;height:5.55px;background:#c8c8c8"></div>
<div class="r" style="left:275.00px;top:362.43px;width:5.55px;height:5.55px;background:#ececec"></div>
<div class="r" style="left:264.00px;top:367.93px;width:5.55px;height:5.55px;background:#efefef"></div>
<div class="r" style="left:269.50px;top:367.93px;width:5.55px;height:5.55px;background:#f0f0f0"></div>
<div class="t" style="left:358.20px;top:366.20px;font-size:6.84px;color:#444;font-weight:normal;transform:scaleX(0.830);transform-origin:0 50%;will-change:transform">L8004</div>
<div class="r" style="left:449.60px;top:362.43px;width:5.65px;height:5.50px;background:#f6f6f6"></div>
<div class="r" style="left:449.60px;top:367.93px;width:5.65px;height:5.50px;background:#e8e8e8"></div>
<div class="r" style="left:455.20px;top:362.43px;width:5.65px;height:5.50px;background:#f1f1f1"></div>
<div class="r" style="left:455.20px;top:367.93px;width:5.65px;height:5.50px;background:#cccccc"></div>
<div class="r" style="left:460.80px;top:362.43px;width:5.65px;height:5.50px;background:#f3f3f3"></div>
<div class="r" style="left:460.80px;top:367.93px;width:5.65px;height:5.50px;background:#d2d2d2"></div>
<div class="r" style="left:466.40px;top:362.43px;width:5.65px;height:5.50px;background:#eeeeee"></div>
<div class="r" style="left:466.40px;top:367.93px;width:5.65px;height:5.50px;background:#cdcdcd"></div>
<div class="r" style="left:472.00px;top:362.43px;width:5.65px;height:5.50px;background:#f0f0f0"></div>
<div class="r" style="left:472.00px;top:367.93px;width:5.65px;height:5.50px;background:#c4c4c4"></div>
<div class="r" style="left:477.60px;top:362.43px;width:5.65px;height:5.50px;background:#ececec"></div>
<div class="r" style="left:477.60px;top:367.93px;width:5.65px;height:5.50px;background:#d0d0d0"></div>
<div class="r" style="left:483.20px;top:362.43px;width:5.65px;height:5.50px;background:#f6f6f6"></div>
<div class="r" style="left:483.20px;top:367.93px;width:5.65px;height:5.50px;background:#e6e6e6"></div>
<svg class="r" style="left:584.30px;top:365.43px" width="9.8" height="7.2" viewBox="0 0 9.8 7.2"><rect x="0.35" y="0.35" width="9.1" height="6.5" fill="#fff" stroke="#bfcad8" stroke-width="0.7"/><path d="M0.5 1.0 L2.4 2.4 L4.3 4.6 L5.3 3.8 L6.8 5.2 L8.3 6.8 H0.5 Z" fill="#1d4f9a"/><circle cx="7.3" cy="1.7" r="0.85" fill="#1d4f9a"/></svg>
<div class="t" style="left:737.20px;top:365.32px;font-size:7.40px;color:#464646;font-weight:normal;transform:scaleX(0.805);transform-origin:0 50%;will-change:transform">2023-02-09 09:23:07</div>
<div class="r" style="left:130.00px;top:403.00px;width:690.00px;height:0.80px;background:#edf0f4"></div>
<div class="t" style="left:135.30px;top:388.18px;font-size:6.98px;color:#333;font-weight:normal;transform:scaleX(0.670);transform-origin:0 50%;will-change:transform">8</div>
<div class="r" style="left:168.00px;top:387.18px;width:18.70px;height:9.00px;background:#f0f9f4;border:0.8px solid #b9e0c8;border-radius:2px;box-sizing:border-box"></div>
<div class="t" style="left:170.00px;top:388.68px;font-size:7.39px;color:#3f9b63;font-weight:normal;-webkit-text-stroke:0.12px #3f9b63;">正常</div>
<div class="r" style="left:264.00px;top:385.28px;width:5.55px;height:5.55px;background:#c6c6c6"></div>
<div class="r" style="left:269.50px;top:385.28px;width:5.55px;height:5.55px;background:#c2c2c2"></div>
<div class="r" style="left:275.00px;top:385.28px;width:5.55px;height:5.55px;background:#c8c8c8"></div>
<div class="r" style="left:280.50px;top:385.28px;width:5.55px;height:5.55px;background:#eaeaea"></div>
<div class="r" style="left:264.00px;top:390.78px;width:5.55px;height:5.55px;background:#efefef"></div>
<div class="r" style="left:269.50px;top:390.78px;width:5.55px;height:5.55px;background:#f0f0f0"></div>
<div class="r" style="left:275.00px;top:390.78px;width:5.55px;height:5.55px;background:#f0f0f0"></div>
<div class="t" style="left:358.20px;top:389.05px;font-size:6.84px;color:#444;font-weight:normal;transform:scaleX(0.830);transform-origin:0 50%;will-change:transform">L8004</div>
<div class="r" style="left:449.60px;top:385.28px;width:5.65px;height:5.50px;background:#f6f6f6"></div>
<div class="r" style="left:449.60px;top:390.78px;width:5.65px;height:5.50px;background:#e8e8e8"></div>
<div class="r" style="left:455.20px;top:385.28px;width:5.65px;height:5.50px;background:#f1f1f1"></div>
<div class="r" style="left:455.20px;top:390.78px;width:5.65px;height:5.50px;background:#cccccc"></div>
<div class="r" style="left:460.80px;top:385.28px;width:5.65px;height:5.50px;background:#f3f3f3"></div>
<div class="r" style="left:460.80px;top:390.78px;width:5.65px;height:5.50px;background:#d2d2d2"></div>
<div class="r" style="left:466.40px;top:385.28px;width:5.65px;height:5.50px;background:#eeeeee"></div>
<div class="r" style="left:466.40px;top:390.78px;width:5.65px;height:5.50px;background:#cdcdcd"></div>
<div class="r" style="left:472.00px;top:385.28px;width:5.65px;height:5.50px;background:#f0f0f0"></div>
<div class="r" style="left:472.00px;top:390.78px;width:5.65px;height:5.50px;background:#c4c4c4"></div>
<div class="r" style="left:477.60px;top:385.28px;width:5.65px;height:5.50px;background:#ececec"></div>
<div class="r" style="left:477.60px;top:390.78px;width:5.65px;height:5.50px;background:#d0d0d0"></div>
<div class="r" style="left:483.20px;top:385.28px;width:5.65px;height:5.50px;background:#f6f6f6"></div>
<div class="r" style="left:483.20px;top:390.78px;width:5.65px;height:5.50px;background:#e6e6e6"></div>
<svg class="r" style="left:584.30px;top:388.28px" width="9.8" height="7.2" viewBox="0 0 9.8 7.2"><rect x="0.35" y="0.35" width="9.1" height="6.5" fill="#fff" stroke="#bfcad8" stroke-width="0.7"/><path d="M0.5 1.0 L2.4 2.4 L4.3 4.6 L5.3 3.8 L6.8 5.2 L8.3 6.8 H0.5 Z" fill="#1d4f9a"/><circle cx="7.3" cy="1.7" r="0.85" fill="#1d4f9a"/></svg>
<div class="t" style="left:737.20px;top:388.17px;font-size:7.40px;color:#464646;font-weight:normal;transform:scaleX(0.805);transform-origin:0 50%;will-change:transform">2023-02-09 09:32:26</div>
<div class="r" style="left:130.00px;top:425.85px;width:690.00px;height:0.80px;background:#edf0f4"></div>
<div class="t" style="left:135.30px;top:411.03px;font-size:6.98px;color:#333;font-weight:normal;transform:scaleX(0.670);transform-origin:0 50%;will-change:transform">9</div>
<div class="r" style="left:168.00px;top:410.03px;width:18.70px;height:9.00px;background:#f0f9f4;border:0.8px solid #b9e0c8;border-radius:2px;box-sizing:border-box"></div>
<div class="t" style="left:170.00px;top:411.53px;font-size:7.39px;color:#3f9b63;font-weight:normal;-webkit-text-stroke:0.12px #3f9b63;">正常</div>
<div class="r" style="left:264.00px;top:408.13px;width:5.55px;height:5.55px;background:#cdcdcd"></div>
<div class="r" style="left:269.50px;top:408.13px;width:5.55px;height:5.55px;background:#c8c8c8"></div>
<div class="r" style="left:275.00px;top:408.13px;width:5.55px;height:5.55px;background:#cdcdcd"></div>
<div class="r" style="left:280.50px;top:408.13px;width:5.55px;height:5.55px;background:#e8e8e8"></div>
<div class="r" style="left:264.00px;top:413.63px;width:5.55px;height:5.55px;background:#e6e6e6"></div>
<div class="r" style="left:269.50px;top:413.63px;width:5.55px;height:5.55px;background:#e4e4e4"></div>
<div class="r" style="left:275.00px;top:413.63px;width:5.55px;height:5.55px;background:#e6e6e6"></div>
<div class="t" style="left:358.20px;top:411.90px;font-size:6.84px;color:#444;font-weight:normal;transform:scaleX(0.830);transform-origin:0 50%;will-change:transform">L8004</div>
<div class="r" style="left:449.60px;top:408.13px;width:5.65px;height:5.50px;background:#f6f6f6"></div>
<div class="r" style="left:449.60px;top:413.63px;width:5.65px;height:5.50px;background:#e8e8e8"></div>
<div class="r" style="left:455.20px;top:408.13px;width:5.65px;height:5.50px;background:#f1f1f1"></div>
<div class="r" style="left:455.20px;top:413.63px;width:5.65px;height:5.50px;background:#cccccc"></div>
<div class="r" style="left:460.80px;top:408.13px;width:5.65px;height:5.50px;background:#f3f3f3"></div>
<div class="r" style="left:460.80px;top:413.63px;width:5.65px;height:5.50px;background:#d2d2d2"></div>
<div class="r" style="left:466.40px;top:408.13px;width:5.65px;height:5.50px;background:#eeeeee"></div>
<div class="r" style="left:466.40px;top:413.63px;width:5.65px;height:5.50px;background:#cdcdcd"></div>
<div class="r" style="left:472.00px;top:408.13px;width:5.65px;height:5.50px;background:#f0f0f0"></div>
<div class="r" style="left:472.00px;top:413.63px;width:5.65px;height:5.50px;background:#c4c4c4"></div>
<div class="r" style="left:477.60px;top:408.13px;width:5.65px;height:5.50px;background:#ececec"></div>
<div class="r" style="left:477.60px;top:413.63px;width:5.65px;height:5.50px;background:#d0d0d0"></div>
<div class="r" style="left:483.20px;top:408.13px;width:5.65px;height:5.50px;background:#f6f6f6"></div>
<div class="r" style="left:483.20px;top:413.63px;width:5.65px;height:5.50px;background:#e6e6e6"></div>
<svg class="r" style="left:584.30px;top:411.13px" width="9.8" height="7.2" viewBox="0 0 9.8 7.2"><rect x="0.35" y="0.35" width="9.1" height="6.5" fill="#fff" stroke="#bfcad8" stroke-width="0.7"/><path d="M0.5 1.0 L2.4 2.4 L4.3 4.6 L5.3 3.8 L6.8 5.2 L8.3 6.8 H0.5 Z" fill="#1d4f9a"/><circle cx="7.3" cy="1.7" r="0.85" fill="#1d4f9a"/></svg>
<div class="t" style="left:737.20px;top:411.02px;font-size:7.40px;color:#464646;font-weight:normal;transform:scaleX(0.805);transform-origin:0 50%;will-change:transform">2023-02-09 09:41:26</div>
<div class="r" style="left:130.00px;top:448.70px;width:690.00px;height:0.80px;background:#edf0f4"></div>
<div class="t" style="left:135.30px;top:433.88px;font-size:6.98px;color:#333;font-weight:normal;transform:scaleX(0.747);transform-origin:0 50%;will-change:transform">10</div>
<div class="r" style="left:168.00px;top:432.88px;width:18.70px;height:9.00px;background:#f0f9f4;border:0.8px solid #b9e0c8;border-radius:2px;box-sizing:border-box"></div>
<div class="t" style="left:170.00px;top:434.38px;font-size:7.39px;color:#3f9b63;font-weight:normal;-webkit-text-stroke:0.12px #3f9b63;">正常</div>
<div class="r" style="left:264.00px;top:430.98px;width:5.55px;height:5.55px;background:#d2d2d2"></div>
<div class="r" style="left:269.50px;top:430.98px;width:5.55px;height:5.55px;background:#dadada"></div>
<div class="r" style="left:264.00px;top:436.48px;width:5.55px;height:5.55px;background:#cccccc"></div>
<div class="r" style="left:269.50px;top:436.48px;width:5.55px;height:5.55px;background:#d6d6d6"></div>
<div class="r" style="left:275.00px;top:430.98px;width:5.55px;height:5.55px;background:#ececec"></div>
<div class="r" style="left:275.00px;top:436.48px;width:5.55px;height:5.55px;background:#e8e8e8"></div>
<div class="t" style="left:358.20px;top:434.75px;font-size:6.84px;color:#444;font-weight:normal;transform:scaleX(0.830);transform-origin:0 50%;will-change:transform">L8004</div>
<div class="r" style="left:449.60px;top:430.98px;width:5.65px;height:5.50px;background:#f6f6f6"></div>
<div class="r" style="left:449.60px;top:436.48px;width:5.65px;height:5.50px;background:#e8e8e8"></div>
<div class="r" style="left:455.20px;top:430.98px;width:5.65px;height:5.50px;background:#f1f1f1"></div>
<div class="r" style="left:455.20px;top:436.48px;width:5.65px;height:5.50px;background:#cccccc"></div>
<div class="r" style="left:460.80px;top:430.98px;width:5.65px;height:5.50px;background:#f3f3f3"></div>
<div class="r" style="left:460.80px;top:436.48px;width:5.65px;height:5.50px;background:#d2d2d2"></div>
<div class="r" style="left:466.40px;top:430.98px;width:5.65px;height:5.50px;background:#eeeeee"></div>
<div class="r" style="left:466.40px;top:436.48px;width:5.65px;height:5.50px;background:#cdcdcd"></div>
<div class="r" style="left:472.00px;top:430.98px;width:5.65px;height:5.50px;background:#f0f0f0"></div>
<div class="r" style="left:472.00px;top:436.48px;width:5.65px;height:5.50px;background:#c4c4c4"></div>
<div class="r" style="left:477.60px;top:430.98px;width:5.65px;height:5.50px;background:#ececec"></div>
<div class="r" style="left:477.60px;top:436.48px;width:5.65px;height:5.50px;background:#d0d0d0"></div>
<div class="r" style="left:483.20px;top:430.98px;width:5.65px;height:5.50px;background:#f6f6f6"></div>
<div class="r" style="left:483.20px;top:436.48px;width:5.65px;height:5.50px;background:#e6e6e6"></div>
<svg class="r" style="left:584.30px;top:433.98px" width="9.8" height="7.2" viewBox="0 0 9.8 7.2"><rect x="0.35" y="0.35" width="9.1" height="6.5" fill="#fff" stroke="#bfcad8" stroke-width="0.7"/><path d="M0.5 1.0 L2.4 2.4 L4.3 4.6 L5.3 3.8 L6.8 5.2 L8.3 6.8 H0.5 Z" fill="#1d4f9a"/><circle cx="7.3" cy="1.7" r="0.85" fill="#1d4f9a"/></svg>
<div class="t" style="left:737.20px;top:433.87px;font-size:7.40px;color:#464646;font-weight:normal;transform:scaleX(0.805);transform-origin:0 50%;will-change:transform">2023-02-09 09:53:15</div>
<svg class="r" style="left:581.20px;top:232.60px" width="12" height="14" viewBox="0 0 12 14"><path d="M3.2 1.2 C3.2 0.3 4.6 0.3 4.6 1.2 V5.2 C6 4.6 8.6 5.2 9.2 6.4 C9.8 8 9.4 10.2 8 11.8 C6.6 13 3.6 12.8 2.4 11.2 L0.8 8.6 C0.4 7.8 1.6 7.2 2.2 7.9 L3.2 9 Z" fill="#fff" stroke="#555" stroke-width="0.8"/></svg>
<div class="r" style="left:-4px;top:403px;width:808px;height:51px;background:linear-gradient(to bottom, rgba(0,0,0,0) 0px, rgba(0,0,0,0.03) 12px, rgba(0,0,0,0.12) 25px, rgba(0,0,0,0.27) 36px, rgba(0,0,0,0.44) 47px, rgba(0,0,0,0.48) 51px)"></div>
</div></div>
</body></html>
